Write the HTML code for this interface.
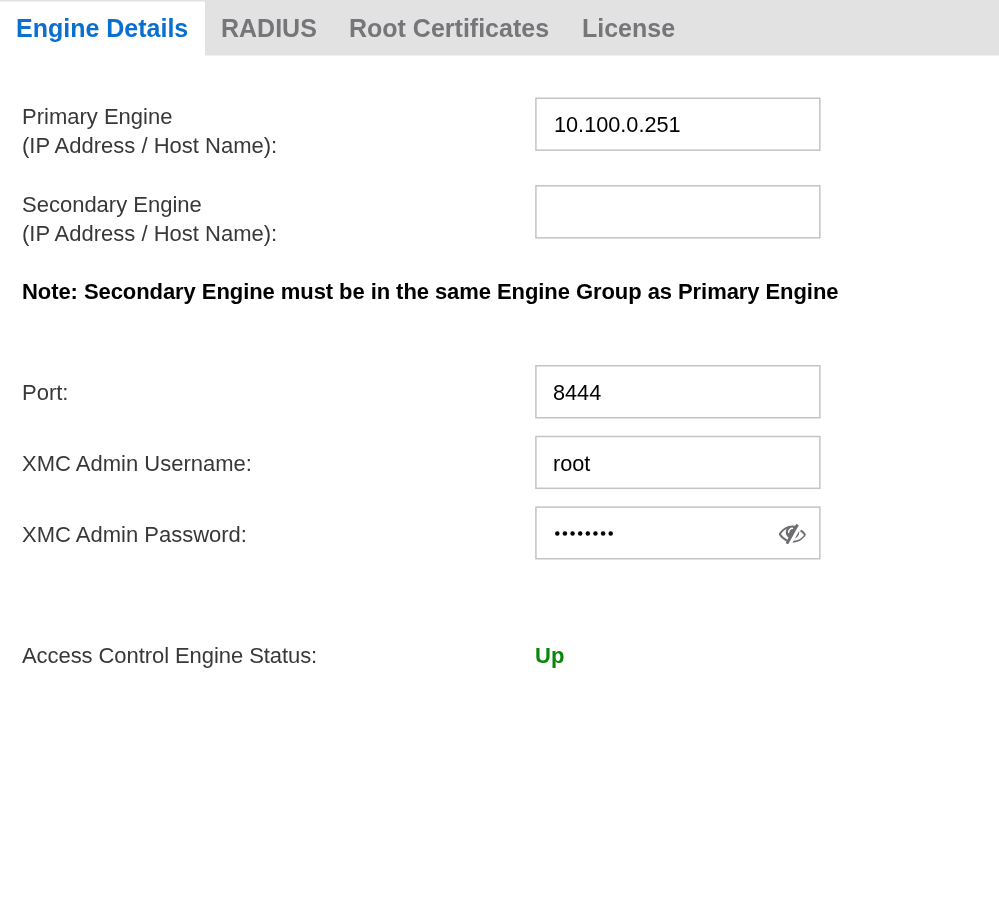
<!DOCTYPE html>
<html><head><meta charset="utf-8">
<style>
html,body{margin:0;padding:0;background:#fff;}
body{width:999px;height:903px;position:relative;overflow:hidden;font-family:"Liberation Sans",sans-serif;}
.bar{position:absolute;left:0;top:0;width:999px;height:55px;background:#e2e2e2;}
.tab-active{position:absolute;left:0;top:1px;width:205px;height:54px;background:#fff;border-top:1px solid #efefef;box-sizing:border-box;}
.t{position:absolute;white-space:pre;line-height:30px;will-change:transform;}
.tab{font-size:25px;font-weight:bold;color:#76767a;}
.tab.a{color:#0b6fd0;}
.lbl{font-size:22px;color:#383838;}
.box{position:absolute;left:535px;width:283px;height:51px;border:1px solid #c6c6c6;box-shadow:0 0 0 0.5px rgba(0,0,0,0.05);background:#fff;}
.val{font-size:21.7px;color:#000;}
.note{font-size:22px;letter-spacing:-0.07px;font-weight:bold;color:#000;}
.up{font-size:22px;font-weight:bold;color:#0a870a;}
</style></head><body>
<div class="bar"></div>
<div style="position:absolute;left:205px;top:55px;width:794px;height:1px;background:#f1f1f1"></div>
<svg style="position:absolute;left:0;top:0" width="999" height="903"><g fill="none" stroke="#c4c4c4" stroke-width="1.5"><rect x="535.9" y="98.25" width="283.95" height="51.90"/><rect x="535.9" y="185.8" width="283.95" height="52.00"/><rect x="535.9" y="365.75" width="283.95" height="52.00"/><rect x="535.9" y="436.5" width="283.95" height="51.80"/><rect x="535.9" y="507.1" width="283.95" height="51.65"/></g></svg>

<div class="tab-active"></div>
<div class="t tab a" style="left:15.6px;top:13px">Engine Details</div>
<div class="t tab" style="left:220.6px;top:13px">RADIUS</div>
<div class="t tab" style="left:348.6px;top:13px">Root Certificates</div>
<div class="t tab" style="left:581.7px;top:13px">License</div>

<div class="t lbl" style="left:22px;top:102px">Primary Engine</div>
<div class="t lbl" style="left:22px;top:131px">(IP Address / Host Name):</div>
<div class="t val" style="left:554px;top:110px">10.100.0.251</div>

<div class="t lbl" style="left:22px;top:190px">Secondary Engine</div>
<div class="t lbl" style="left:22px;top:219px">(IP Address / Host Name):</div>

<div class="t note" style="left:22px;top:277px">Note: Secondary Engine must be in the same Engine Group as Primary Engine</div>

<div class="t lbl" style="left:22px;top:378px">Port:</div>
<div class="t val" style="left:553px;top:378px">8444</div>

<div class="t lbl" style="left:22px;top:449px">XMC Admin Username:</div>
<div class="t val" style="left:553px;top:449px">root</div>

<div class="t lbl" style="left:22px;top:520px">XMC Admin Password:</div>
<svg style="position:absolute;left:550px;top:525px" width="70" height="17" viewBox="0 0 70 17"><circle cx="7.30" cy="8.5" r="2.25"/><circle cx="14.93" cy="8.5" r="2.25"/><circle cx="22.56" cy="8.5" r="2.25"/><circle cx="30.19" cy="8.5" r="2.25"/><circle cx="37.82" cy="8.5" r="2.25"/><circle cx="45.45" cy="8.5" r="2.25"/><circle cx="53.08" cy="8.5" r="2.25"/><circle cx="60.71" cy="8.5" r="2.25"/></svg>
<svg style="position:absolute;left:778.8px;top:524.1px" width="27" height="20.2" viewBox="0 -96 1792 1344" preserveAspectRatio="none"><g transform="matrix(1 0 0 -1 0 1152)"><path fill="#6e6e72" fill-rule="evenodd" d="M555 201l78 141q-87 63 -136 159t-49 203q0 121 61 225q-229 -117 -381 -353q167 -258 427 -375zM944 960q0 20 -14 34t-34 14q-125 0 -214.5 -89.5t-89.5 -214.5q0 -20 14 -34t34 -14t34 14t14 34q0 86 61 147t147 61q20 0 34 14t14 34zM1307 1151q0 -7 -1 -9q-105 -188 -315 -566t-316 -567l-49 -89q-10 -16 -28 -16q-12 0 -134 70q-16 10 -16 28q0 12 44 87q-143 65 -263.5 173t-208.5 245q-20 31 -20 69t20 69q153 235 380 371t496 136q89 0 180 -17l54 97q10 16 28 16q5 0 18 -6t31 -15.5t33 -18.5t31.5 -18.5t19.5 -11.5q16 -10 16 -27zM1344 704q0 -139 -79 -253.5t-209 -164.5l280 502q8 -45 8 -84zM1792 576q0 -35 -20 -69q-39 -64 -109 -145q-150 -172 -347.5 -267t-419.5 -95l74 132q212 18 392.5 103.5t301.5 276.5q-113 160 -268 252l69 123q64 -39 125 -95t92 -90t45 -56.5t30 -44.5q20 -34 20 -69z"/></g></svg>

<div class="t lbl" style="left:22px;top:641px;letter-spacing:-0.07px">Access Control Engine Status:</div>
<div class="t up" style="left:535px;top:641px">Up</div>
</body></html>
